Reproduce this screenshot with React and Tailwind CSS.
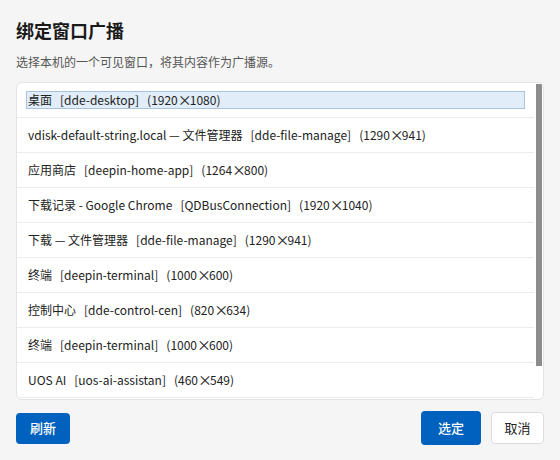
const windows = [
  { name: "桌面", cls: "dde-desktop", w: "1920", h: "1080" },
  { name: "vdisk-default-string.local — 文件管理器", cls: "dde-file-manage", w: "1290", h: "941" },
  { name: "应用商店", cls: "deepin-home-app", w: "1264", h: "800" },
  { name: "下载记录 - Google Chrome", cls: "QDBusConnection", w: "1920", h: "1040" },
  { name: "下载 — 文件管理器", cls: "dde-file-manage", w: "1290", h: "941" },
  { name: "终端", cls: "deepin-terminal", w: "1000", h: "600" },
  { name: "控制中心", cls: "dde-control-cen", w: "820", h: "634" },
  { name: "终端", cls: "deepin-terminal", w: "1000", h: "600" },
  { name: "UOS AI", cls: "uos-ai-assistan", w: "460", h: "549" },
  { name: "音乐", cls: "deepin-music", w: "1040", h: "680" },
];

function WindowRow({ item, selected }) {
  return (
    <div className="h-[35px] shrink-0 border-b border-[#ececec] flex items-center">
      <div
        className={`mx-[9px] flex-1 h-[18px] flex items-center pl-[1px] border ${
          selected ? "bg-[#e1edf9] border-[#a9c3de]" : "border-transparent"
        }`}
      >
        <span className="whitespace-pre text-[12px] text-[#222]">{item.name}</span>
        <span className="ml-[8px] whitespace-pre text-[12px] text-[#222]">[{item.cls}]</span>
        <span className="ml-[8px] whitespace-pre text-[12px] text-[#222]">
          ({item.w}
          <span className="inline-block w-[12px] text-center text-[14px] leading-none">×</span>
          {item.h})
        </span>
      </div>
    </div>
  );
}

export default function App() {
  const selected = 0;

  return (
    <div
      className="w-[560px] h-[460px] bg-[#f5f5f5] px-4 flex flex-col"
      style={{ fontFamily: '"Noto Sans CJK SC", "Noto Sans", sans-serif' }}
    >
      <h1 className="pt-[17px] text-[18px] leading-[26px] font-bold text-[#1a1a1a]">
        绑定窗口广播
      </h1>
      <p className="mt-[10px] text-[12px] leading-[18px] text-[#555]">
        选择本机的一个可见窗口，将其内容作为广播源。
      </p>

      <div className="relative mt-[11px] h-[318px] rounded-md border border-[#e4e4e4] bg-white overflow-hidden">
        <div className="mr-[9px] flex flex-col">
          {windows.map((w, i) => (
            <WindowRow key={i} item={w} selected={i === selected} />
          ))}
        </div>
        <div className="absolute right-[1px] top-[1px] w-[6px] h-[282px] bg-[#8c8c8c]" />
      </div>

      <div className="mt-[11px] flex items-center">
        <button className="w-[54px] h-[31px] rounded bg-[#0061be] text-white text-[13px] font-medium">
          刷新
        </button>
        <div className="ml-auto flex items-center gap-[10px]">
          <button className="w-[60px] h-[34px] rounded bg-[#0061be] text-white text-[13px] font-medium">
            选定
          </button>
          <button className="w-[53px] h-[32px] rounded border border-[#dcdcdc] bg-white text-[#222] text-[13px]">
            取消
          </button>
        </div>
      </div>
    </div>
  );
}
